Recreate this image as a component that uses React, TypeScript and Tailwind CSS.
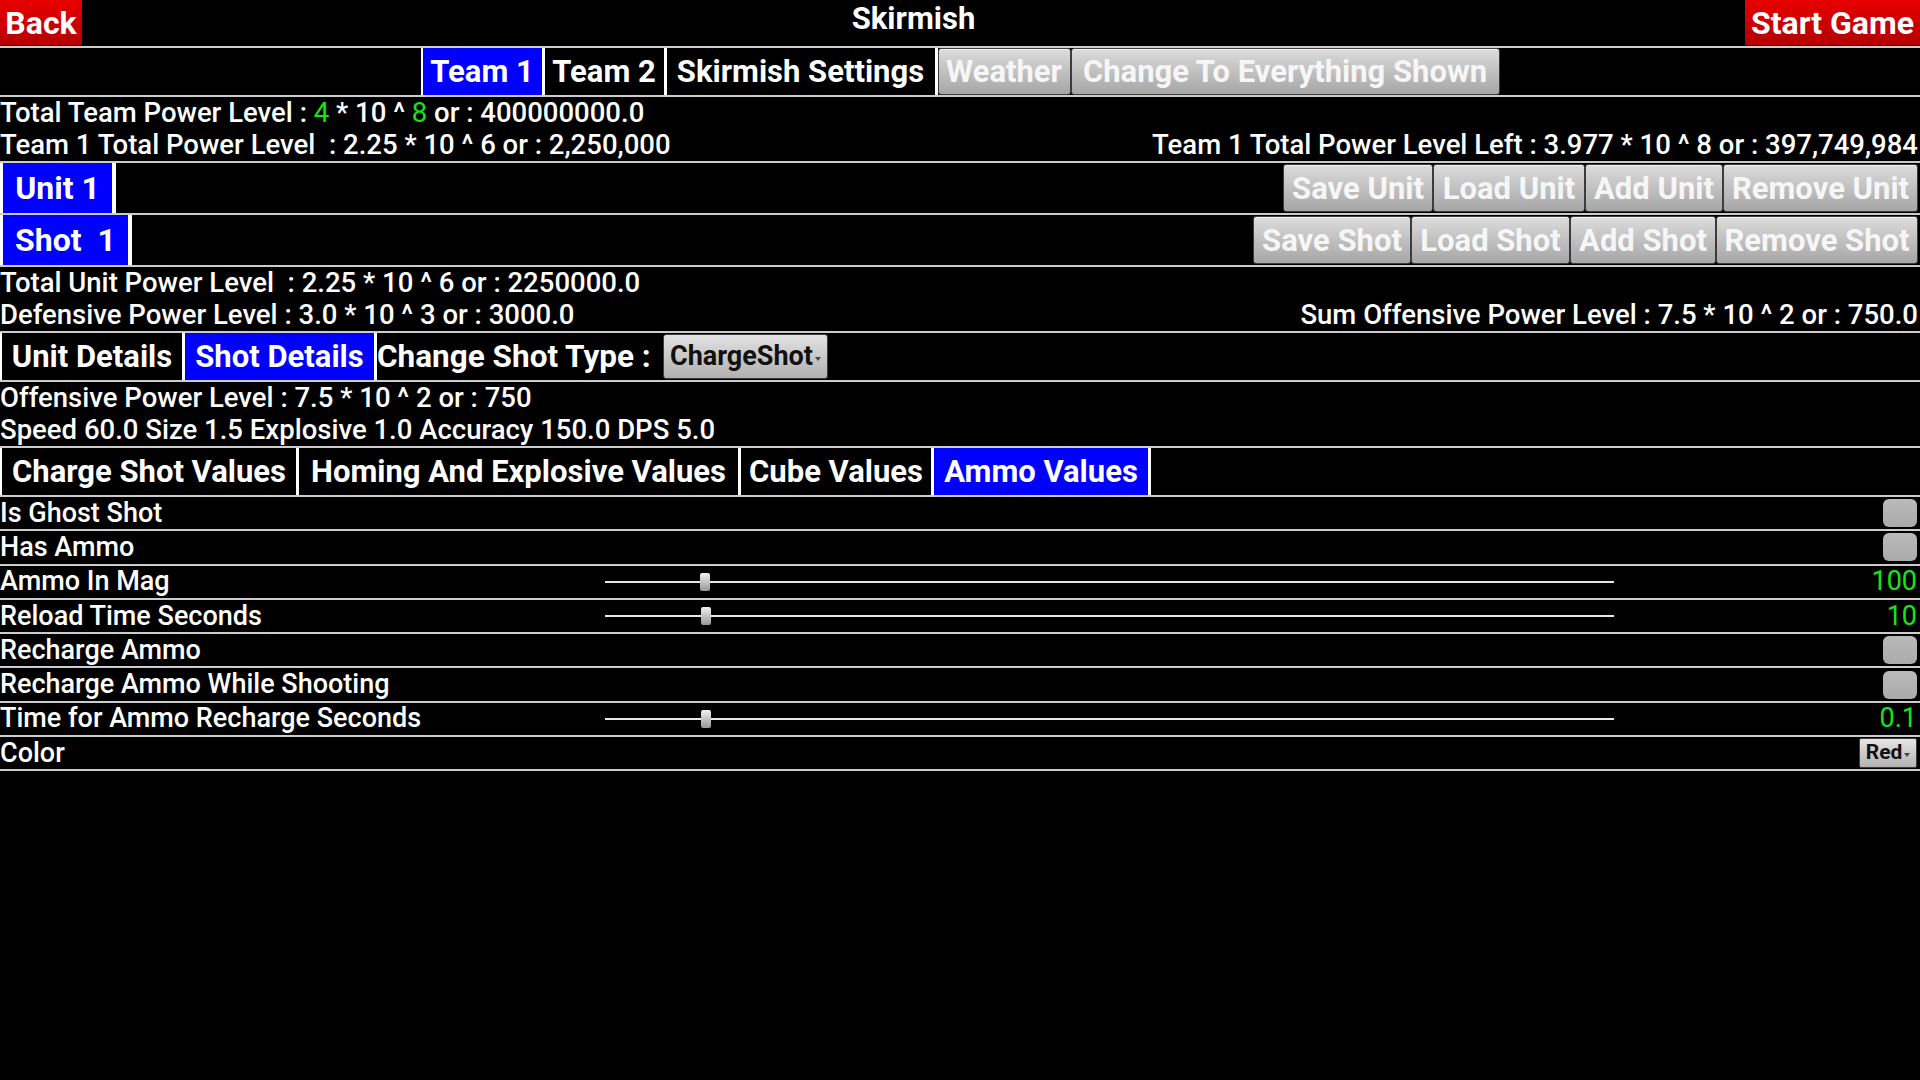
const font = { fontFamily: "Roboto, 'Liberation Sans', sans-serif" };
const green = "text-[#16e616]";

function Rule() {
  return <div className="h-[2px] bg-[#cccccc]" />;
}

function RedButton({ label, width }: { label: string; width: string }) {
  return (
    <button
      className={`${width} h-[45px] bg-gradient-to-b from-[#e80000] to-[#b30000] text-[32px] font-bold leading-none text-white`}
    >
      {label}
    </button>
  );
}

// black / blue tab with white edges
function Tab({ label, width, active, first }: { label: string; width: string; active?: boolean; first?: boolean }) {
  return (
    <div
      className={`${width} flex h-full shrink-0 items-center justify-center border-r-[3px] border-white text-[31px] font-bold leading-none whitespace-nowrap ${
        first ? "border-l-2" : ""
      } ${active ? "bg-[#0000ff]" : "bg-black"}`}
    >
      {label}
    </div>
  );
}

// raised gray button
function GrayButton({ label, width }: { label: string; width: string }) {
  return (
    <div
      className={`${width} flex h-full shrink-0 items-center justify-center rounded-[3px] border border-[#3c3c3c] bg-gradient-to-b from-[#dcdcdc] to-[#a6a6a6] text-[31px] font-bold leading-none whitespace-nowrap text-[#f6f6f6] shadow-[inset_0_1px_0_#f2f2f2]`}
    >
      {label}
    </div>
  );
}

function Caret() {
  return (
    <span className="ml-[2px] inline-block translate-y-[2px] border-x-[3px] border-t-[4px] border-x-transparent border-t-[#444]" />
  );
}

function Checkbox() {
  return <div className="h-[28px] w-[34px] rounded-[6px] bg-gradient-to-b from-[#bababa] to-[#aaaaaa]" />;
}

function Slider({ pos }: { pos: number }) {
  return (
    <div className="relative flex h-full items-center">
      <div className="h-[2px] w-full bg-[#e8e8e8]" />
      <div
        className="absolute top-1/2 h-[18px] w-[10px] -translate-y-1/2 rounded-[2px] bg-gradient-to-b from-[#f2f2f2] to-[#979797]"
        style={{ left: `${pos}%` }}
      />
    </div>
  );
}

type Row =
  | { label: string; kind: "check" }
  | { label: string; kind: "slider"; value: string; pos: number }
  | { label: string; kind: "select"; value: string };

const rows: Row[] = [
  { label: "Is Ghost Shot", kind: "check" },
  { label: "Has Ammo", kind: "check" },
  { label: "Ammo In Mag", kind: "slider", value: "100", pos: 9.4 },
  { label: "Reload Time Seconds", kind: "slider", value: "10", pos: 9.5 },
  { label: "Recharge Ammo", kind: "check" },
  { label: "Recharge Ammo While Shooting", kind: "check" },
  { label: "Time for Ammo Recharge Seconds", kind: "slider", value: "0.1", pos: 9.5 },
  { label: "Color", kind: "select", value: "Red" },
];

export default function App() {
  return (
    <div className="min-h-screen bg-black text-white" style={font}>
      {/* title bar */}
      <div className="flex h-[46px] items-start">
        <RedButton label="Back" width="w-[82px]" />
        <div className="flex-1 pt-[1px] text-center text-[31px] font-bold leading-[36px]">Skirmish</div>
        <RedButton label="Start Game" width="w-[175px]" />
      </div>
      <Rule />

      {/* team tabs */}
      <div className="flex h-[47px] justify-center">
        <Tab label="Team 1" width="w-[124px]" active first />
        <Tab label="Team 2" width="w-[122px]" />
        <Tab label="Skirmish Settings" width="w-[271px]" />
        <GrayButton label="Weather" width="w-[133px]" />
        <GrayButton label="Change To Everything Shown" width="w-[429px]" />
      </div>
      <Rule />

      <div className="text-[27.5px] font-medium leading-[32px]">
        <div>
          Total Team Power Level : <span className={`font-normal ${green}`}>4</span> * 10 ^{" "}
          <span className={`font-normal ${green}`}>8</span> or : 400000000.0
        </div>
        <div className="flex justify-between pr-[2px]">
          <span className="whitespace-pre">Team 1 Total Power Level  : 2.25 * 10 ^ 6 or : 2,250,000</span>
          <span>Team 1 Total Power Level Left : 3.977 * 10 ^ 8 or : 397,749,984</span>
        </div>
      </div>
      <Rule />

      {/* unit row */}
      <div className="flex h-[50px] items-stretch">
        <div className="flex w-[116px] items-center justify-center border-l-[3px] border-r-4 border-white bg-[#0000ff] text-[32px] font-bold">
          Unit 1
        </div>
        <div className="ml-auto mr-[2px] flex py-px">
          <GrayButton label="Save Unit" width="w-[150px]" />
          <GrayButton label="Load Unit" width="w-[152px]" />
          <GrayButton label="Add Unit" width="w-[138px]" />
          <GrayButton label="Remove Unit" width="w-[195px]" />
        </div>
      </div>
      <Rule />

      {/* shot row */}
      <div className="flex h-[50px] items-stretch">
        <div className="flex w-[132px] items-center justify-center border-l-[3px] border-r-4 border-white bg-[#0000ff] text-[32px] font-bold whitespace-pre">
          Shot  1
        </div>
        <div className="ml-auto mr-[2px] flex py-px">
          <GrayButton label="Save Shot" width="w-[158px]" />
          <GrayButton label="Load Shot" width="w-[159px]" />
          <GrayButton label="Add Shot" width="w-[146px]" />
          <GrayButton label="Remove Shot" width="w-[202px]" />
        </div>
      </div>
      <Rule />

      <div className="text-[27.5px] font-medium leading-[32px]">
        <div className="whitespace-pre">Total Unit Power Level  : 2.25 * 10 ^ 6 or : 2250000.0</div>
        <div className="flex justify-between pr-[2px]">
          <span>Defensive Power Level : 3.0 * 10 ^ 3 or : 3000.0</span>
          <span>Sum Offensive Power Level : 7.5 * 10 ^ 2 or : 750.0</span>
        </div>
      </div>
      <Rule />

      {/* details tabs */}
      <div className="flex h-[47px] items-stretch">
        <Tab label="Unit Details" width="w-[185px]" first />
        <Tab label="Shot Details" width="w-[192px]" active />
        <div className="flex w-[286px] items-center text-[31.5px] font-bold whitespace-nowrap">Change Shot Type :</div>
        <div className="my-[1px] flex w-[165px] items-center justify-center rounded-[3px] border border-[#3c3c3c] bg-gradient-to-b from-[#e2e2e2] to-[#b0b0b0] text-[27px] font-bold text-[#111]">
          ChargeShot
          <Caret />
        </div>
      </div>
      <Rule />

      <div className="text-[27.5px] font-medium leading-[32px]">
        <div>Offensive Power Level : 7.5 * 10 ^ 2 or : 750</div>
        <div>Speed 60.0 Size 1.5 Explosive 1.0 Accuracy 150.0 DPS 5.0</div>
      </div>
      <Rule />

      {/* shot value tabs */}
      <div className="flex h-[47px] items-stretch">
        <Tab label="Charge Shot Values" width="w-[299px]" first />
        <Tab label="Homing And Explosive Values" width="w-[442px]" />
        <Tab label="Cube Values" width="w-[193px]" />
        <Tab label="Ammo Values" width="w-[217px]" active />
      </div>
      <Rule />

      {rows.map((r) => (
        <div key={r.label} className="border-b-2 border-[#cccccc]">
          <div className="grid h-[32.3px] grid-cols-[605px_1009px_1fr] items-center">
            <div className="text-[27px] font-medium leading-none whitespace-nowrap">{r.label}</div>
            <div className="h-full">{r.kind === "slider" && <Slider pos={r.pos} />}</div>
            <div className="flex justify-end pr-[3px]">
              {r.kind === "check" && <Checkbox />}
              {r.kind === "slider" && <span className={`text-[27px] leading-none ${green}`}>{r.value}</span>}
              {r.kind === "select" && (
                <div className="flex h-[30px] w-[58px] items-center justify-center rounded-[2px] border border-[#3c3c3c] bg-gradient-to-b from-[#e6e6e6] to-[#b2b2b2] text-[21px] font-bold text-[#111]">
                  {r.value}
                  <Caret />
                </div>
              )}
            </div>
          </div>
        </div>
      ))}
    </div>
  );
}
